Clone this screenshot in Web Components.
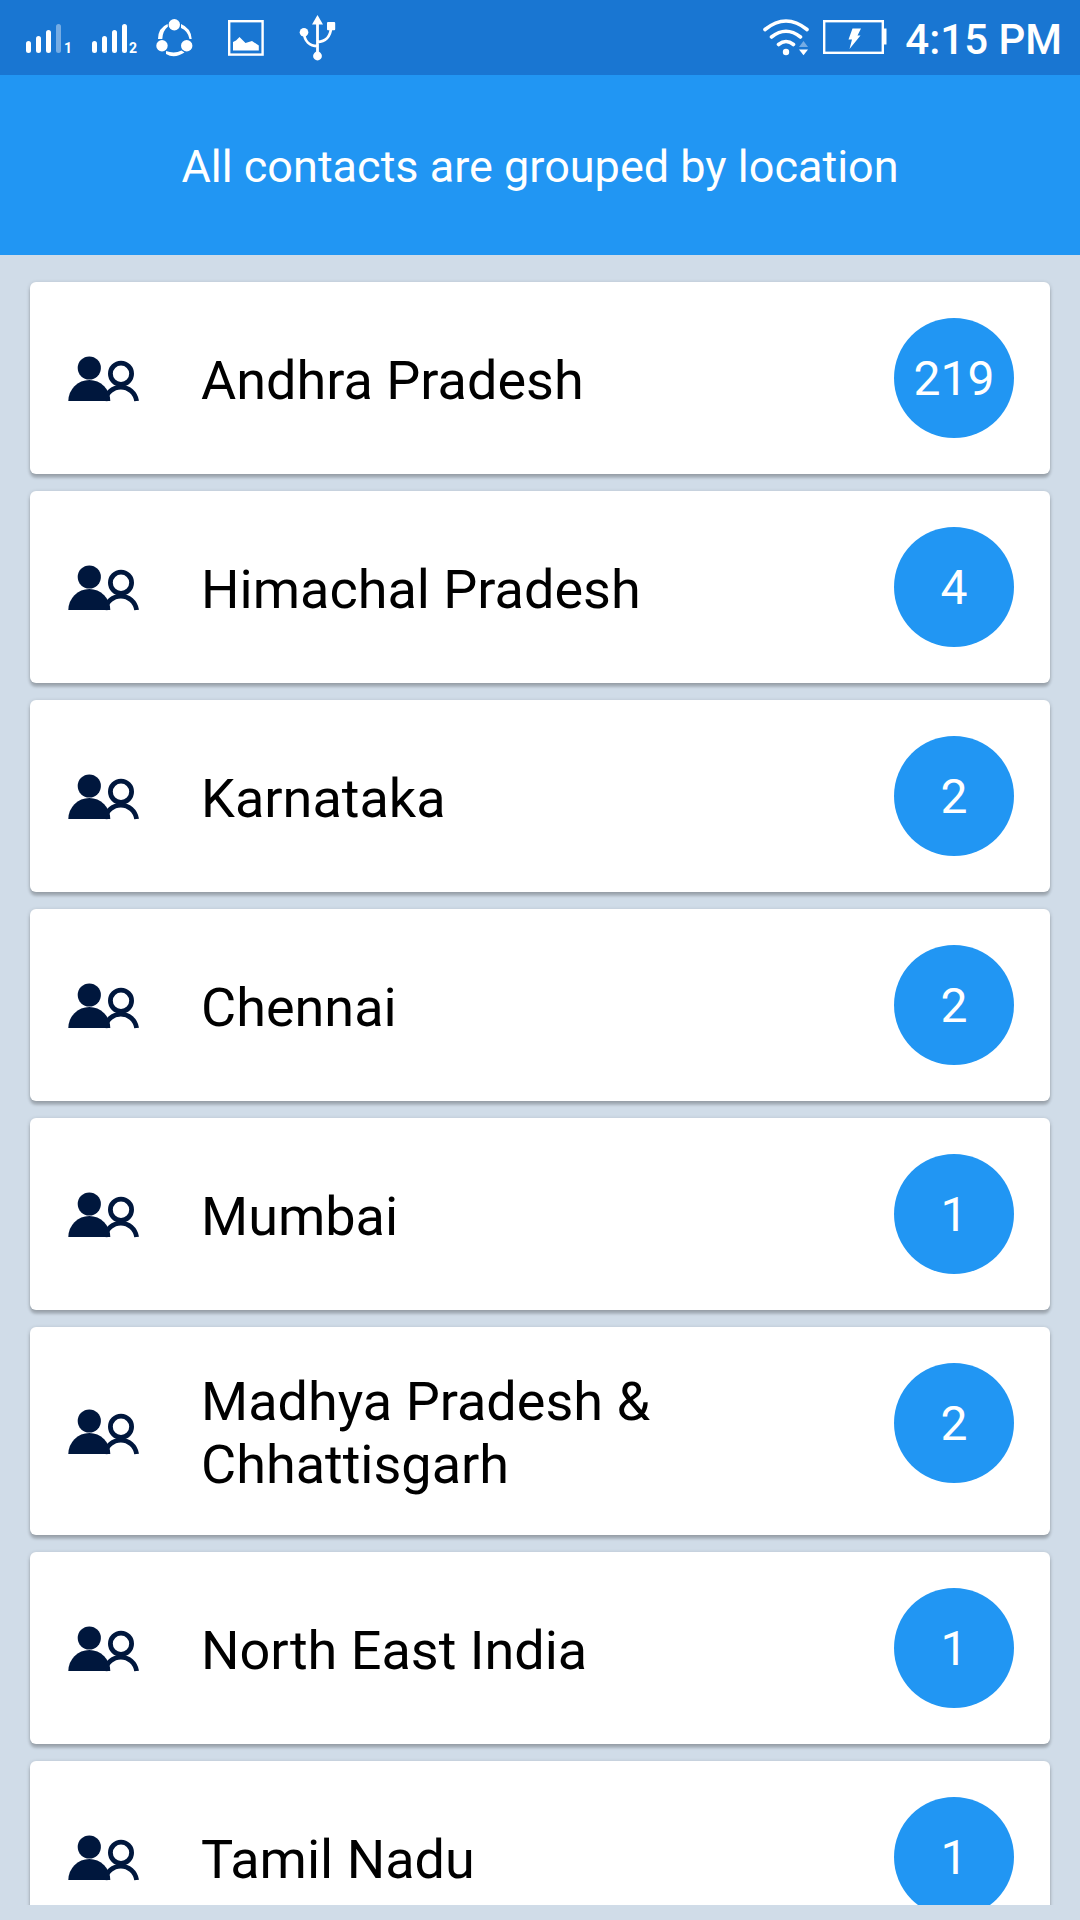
<!DOCTYPE html>
<html lang="en">
<head>
<meta charset="utf-8">
<meta name="viewport" content="width=device-width, initial-scale=1">
<title>Contacts by location</title>
<style>
  body {
    margin: 0;
    background: #d0dce8;
    font-family: Roboto, "Noto Sans", sans-serif;
  }
</style>
</head>
<body>
<contacts-screen>
  <status-bar slot="status" time="4:15 PM"></status-bar>
  <screen-header slot="header">All contacts are grouped by location</screen-header>
  <location-card count="219">Andhra Pradesh</location-card>
  <location-card count="4">Himachal Pradesh</location-card>
  <location-card count="2">Karnataka</location-card>
  <location-card count="2">Chennai</location-card>
  <location-card count="1">Mumbai</location-card>
  <location-card count="2">Madhya Pradesh &amp; Chhattisgarh</location-card>
  <location-card count="1">North East India</location-card>
  <location-card count="1">Tamil Nadu</location-card>
</contacts-screen>

<script>
class ContactsScreen extends HTMLElement {
  constructor() {
    super();
    this.attachShadow({ mode: "open" });
    this.shadowRoot.innerHTML = `
      <style>
        :host {
          display: flex;
          flex-direction: column;
          height: 100vh;
        }
        main {
          flex: 1;
          min-height: 0;
          overflow: hidden;
          display: flex;
          flex-direction: column;
          gap: 17px;
          box-sizing: border-box;
          padding: 27px 30px 0;
          margin-bottom: 15px;
        }
      </style>
      <slot name="status"></slot>
      <slot name="header"></slot>
      <main><slot></slot></main>
    `;
  }
}

class StatusBar extends HTMLElement {
  constructor() {
    super();
    this.attachShadow({ mode: "open" });
    this.shadowRoot.innerHTML = `
      <style>
        :host {
          display: flex;
          justify-content: space-between;
          align-items: center;
          height: 75px;
          padding: 0 18px 0 26px;
          background: #1976d2;
          color: #fff;
        }
        div {
          display: flex;
          align-items: center;
        }
        .left { gap: 18px; }
        .right { gap: 14px; }
        svg {
          display: block;
          height: 75px;
          fill: #fff;
        }
        text {
          font: bold 14px Roboto, sans-serif;
        }
        .line {
          fill: none;
          stroke: #fff;
        }
        .dim { opacity: .4; }
        time {
          font-size: 42px;
          font-weight: 500;
          line-height: 50px;
          white-space: nowrap;
          padding: 4px 0 0 2px;
        }
      </style>
      <div class="left">
        <!-- sim 1 -->
        <svg width="48" viewBox="26 0 48 75">
          <rect x="26" y="41" width="5" height="12" rx="2.5"/>
          <rect x="36" y="36" width="5" height="17" rx="2.5"/>
          <rect x="46" y="30" width="5" height="23" rx="2.5"/>
          <rect class="dim" x="56" y="24" width="5" height="29" rx="2.5"/>
          <text x="64" y="53">1</text>
        </svg>
        <!-- sim 2 -->
        <svg width="46" viewBox="92 0 46 75">
          <rect x="92" y="41" width="5" height="12" rx="2.5"/>
          <rect x="102" y="36" width="5" height="17" rx="2.5"/>
          <rect x="112" y="30" width="5" height="23" rx="2.5"/>
          <rect x="122" y="24" width="5" height="29" rx="2.5"/>
          <text x="129" y="53">2</text>
        </svg>
        <!-- share -->
        <svg width="45" viewBox="156 0 45 75">
          <circle cx="174.3" cy="24.8" r="5.7"/>
          <circle cx="162" cy="45.7" r="5.7"/>
          <circle cx="186.7" cy="45.7" r="5.7"/>
          <path d="M158 39Q158 28 167.500 24L168 26.500Q162.500 31 162.300 39ZM181 24Q191 28 191.700 39H189.500Q188 31 181 28ZM166 51Q174.500 54 181.500 50.500L184.500 52.500Q174.500 59 166 54Z"/>
        </svg>
        <!-- picture -->
        <svg width="54" viewBox="219 0 54 75">
          <rect class="line" x="229.2" y="21.2" width="33.4" height="33.4" stroke-width="2.4"/>
          <path d="M233 42L236 40.5L239.5 37L245.5 43L252 41L258.8 45.5V50.5H233Z"/>
        </svg>
        <!-- usb -->
        <svg width="54" viewBox="291 0 54 75">
          <path d="M317.5 15L323 24.5H312Z"/>
          <circle cx="304" cy="32.2" r="4.3"/>
          <circle cx="317.5" cy="56" r="4.4"/>
          <rect x="327" y="22" width="8.2" height="8.2" rx="1"/>
          <path class="line" stroke-width="2.8" d="M317.5 22V56M304 33C304.5 41 309.5 46 317.5 46M331 28C330.500 37 325 41.5 317.5 42"/>
        </svg>
      </div>
      <div class="right">
        <!-- wifi -->
        <svg width="46" viewBox="762 0 46 75">
          <path class="line" stroke-width="3.6" stroke-linecap="round" d="M764 29.5Q785 12.500 806 29.5M770.5 37Q785 25.5 799.5 37M777.5 44.5Q785 38.5 792.5 44.5"/>
          <circle cx="785" cy="52" r="3.2"/>
          <path class="dim" d="M802.5 41L807 47H798Z"/>
          <path d="M798 49.5H807L802.5 55.3Z"/>
        </svg>
        <!-- battery -->
        <svg width="66" viewBox="822 0 66 75">
          <rect class="line" x="823.2" y="21.2" width="58.6" height="31.6" stroke-width="2.4"/>
          <path d="M883 28.5H885.5V44.5H883Z"/>
          <path d="M851.5 28.5H860L856.5 35.5H859.5L848.5 49L851 39.5H847.5Z"/>
        </svg>
        <time></time>
      </div>
    `;
  }

  connectedCallback() {
    this.shadowRoot.querySelector("time").textContent = this.getAttribute("time");
  }
}

class ScreenHeader extends HTMLElement {
  constructor() {
    super();
    this.attachShadow({ mode: "open" });
    this.shadowRoot.innerHTML = `
      <style>
        :host {
          display: block;
          padding: 65px 30px 61px;
          background: #2196f3;
          color: #fff;
        }
        h1 {
          margin: 0;
          font-size: 45px;
          font-weight: 400;
          line-height: 54px;
          text-align: center;
        }
      </style>
      <h1><slot></slot></h1>
    `;
  }
}

class LocationCard extends HTMLElement {
  constructor() {
    super();
    this.attachShadow({ mode: "open" });
    this.shadowRoot.innerHTML = `
      <style>
        :host {
          display: block;
          flex: none;
        }
        a {
          display: flex;
          align-items: center;
          padding: 36px 36px 36px 38px;
          border-radius: 6px;
          background: #fff;
          color: #000;
          text-decoration: none;
          box-shadow: 0 4px 3px rgba(0, 0, 0, .18), 0 1px 4px rgba(0, 0, 0, .18);
        }
        svg {
          flex: none;
          display: block;
          fill: #00173d;
        }
        .ring {
          fill: none;
          stroke: #00173d;
          stroke-width: 4.8;
        }
        .name {
          flex: 1;
          padding: 7px 0 3px 61px;
          font-size: 54px;
          line-height: 63px;
        }
        .count {
          flex: none;
          align-self: flex-start;
          box-sizing: border-box;
          width: 120px;
          height: 120px;
          padding-top: 2px;
          border-radius: 50%;
          background: #2196f3;
          color: #fff;
          font-size: 48px;
          line-height: 118px;
          text-align: center;
        }
      </style>
      <a href="#">
        <svg width="72" height="47" viewBox="68 355 72 47">
          <circle cx="89.3" cy="368" r="11.6"/>
          <path d="M68.3 401A21 21 0 0 1 110.3 401Z"/>
          <circle class="ring" cx="121" cy="373.8" r="10.6"/>
          <path class="ring" d="M105 401A16 16.5 0 0 1 136.6 401"/>
        </svg>
        <span class="name"><slot></slot></span>
        <span class="count"></span>
      </a>
    `;
  }

  connectedCallback() {
    this.shadowRoot.querySelector(".count").textContent = this.getAttribute("count");
  }
}

customElements.define("contacts-screen", ContactsScreen);
customElements.define("status-bar", StatusBar);
customElements.define("screen-header", ScreenHeader);
customElements.define("location-card", LocationCard);
</script>
</body>
</html>
